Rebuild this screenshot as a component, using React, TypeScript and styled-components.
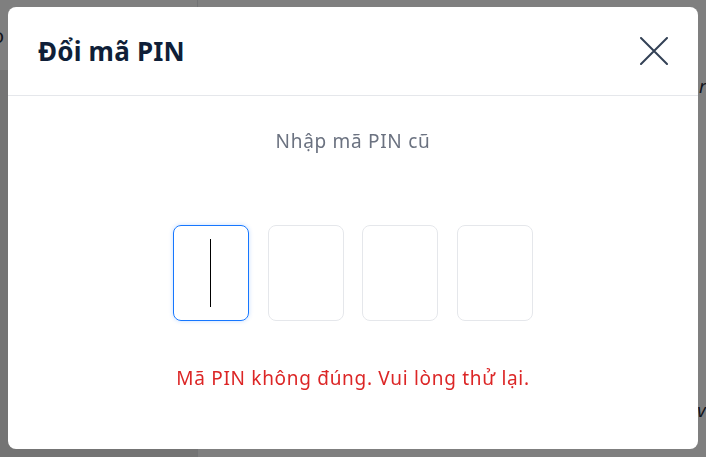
import styled, { createGlobalStyle } from 'styled-components'

const GlobalStyle = createGlobalStyle`
    html, body { margin: 0; padding: 0; }
    body {
        width: 706px;
        height: 457px;
        overflow: hidden;
        font-family: "Noto Sans", "Open Sans", "Liberation Sans", sans-serif;
        background: #fff;
    }
`

// the page sitting under the dimmed overlay
const Page = styled.div`
    display: grid;
    grid-template-columns: 198px 1fr;
    width: 706px;
    height: 457px;
`

const Sidebar = styled.div`
    border-right: 1px solid #e5e7eb;
    display: flex;
    flex-direction: column;
`

const SidebarTop = styled.div`
    height: 70px;
    padding-top: 22px;
    box-sizing: border-box;
    font-size: 20px;
    color: #1f2937;
    span { margin-left: -8px; }
`

const SidebarRest = styled.div`
    flex: 1;
    background: #e8e8e8;
`

const Main = styled.div`
    display: flex;
    flex-direction: column;
    align-items: flex-end;
    gap: 300px;
    padding-top: 74px;
    font-size: 18px;
    color: #1f2937;
    font-style: italic;
    span { margin-right: -10px; }
`

const Overlay = styled.div`
    position: fixed;
    inset: 0;
    background: rgba(0, 0, 0, 0.5);
    padding: 7px 8px 8px 8px;
    box-sizing: border-box;
`

const Modal = styled.div`
    width: 690px;
    height: 442px;
    background: #fff;
    border-radius: 8px;
    display: flex;
    flex-direction: column;
`

const Header = styled.div`
    height: 88px;
    flex-shrink: 0;
    display: flex;
    align-items: center;
    justify-content: space-between;
    padding: 0 30px 0 30px;
    border-bottom: 1px solid #e5e7eb;
`

const Title = styled.h2`
    margin: 0;
    font-size: 26px;
    font-weight: 700;
    color: #0f1f38;
    letter-spacing: 0.2px;
`

const CloseButton = styled.button`
    border: 0;
    background: none;
    padding: 0;
    width: 28px;
    height: 28px;
    display: flex;
    align-items: center;
    justify-content: center;
    cursor: pointer;
    color: #334155;
`

const Body = styled.div`
    display: flex;
    flex-direction: column;
    align-items: center;
    padding-top: 32px;
`

const Hint = styled.p`
    margin: 0;
    font-size: 19px;
    line-height: 26px;
    letter-spacing: 0.7px;
    color: #6b7280;
`

const PinRow = styled.div`
    display: flex;
    gap: 18.7px;
    margin-top: 71px;
`

const PinBox = styled.div<{ $active?: boolean }>`
    width: 76px;
    height: 96px;
    box-sizing: border-box;
    border-radius: 8px;
    border: 1px solid ${p => p.$active ? '#1677ff' : '#e5e7eb'};
    box-shadow: ${p => p.$active ? '0 0 4px rgba(22, 119, 255, 0.25)' : 'none'};
    display: flex;
    align-items: center;
    justify-content: center;
`

const Caret = styled.div`
    width: 1px;
    height: 68px;
    background: #000;
`

const ErrorText = styled.p`
    margin: 44px 0 0;
    font-size: 19px;
    line-height: 26px;
    letter-spacing: 0.7px;
    color: #dc2626;
`

export default function App() {
    const pins = [0, 1, 2, 3]
    return (
        <>
            <GlobalStyle />
            <Page>
                <Sidebar>
                    <SidebarTop><span>o</span></SidebarTop>
                    <SidebarRest />
                </Sidebar>
                <Main><span>ra</span><span>va</span></Main>
            </Page>
            <Overlay>
                <Modal>
                    <Header>
                        <Title>Đổi mã PIN</Title>
                        <CloseButton aria-label="Đóng">
                            <svg width="28" height="28" viewBox="0 0 28 28" fill="none" stroke="currentColor" strokeWidth="2" strokeLinecap="round">
                                <path d="M1 1L27 27M27 1L1 27" />
                            </svg>
                        </CloseButton>
                    </Header>
                    <Body>
                        <Hint>Nhập mã PIN cũ</Hint>
                        <PinRow>
                            {pins.map(i => (
                                <PinBox key={i} $active={i === 0}>
                                    {i === 0 ? <Caret /> : null}
                                </PinBox>
                            ))}
                        </PinRow>
                        <ErrorText>Mã PIN không đúng. Vui lòng thử lại.</ErrorText>
                    </Body>
                </Modal>
            </Overlay>
        </>
    )
}
